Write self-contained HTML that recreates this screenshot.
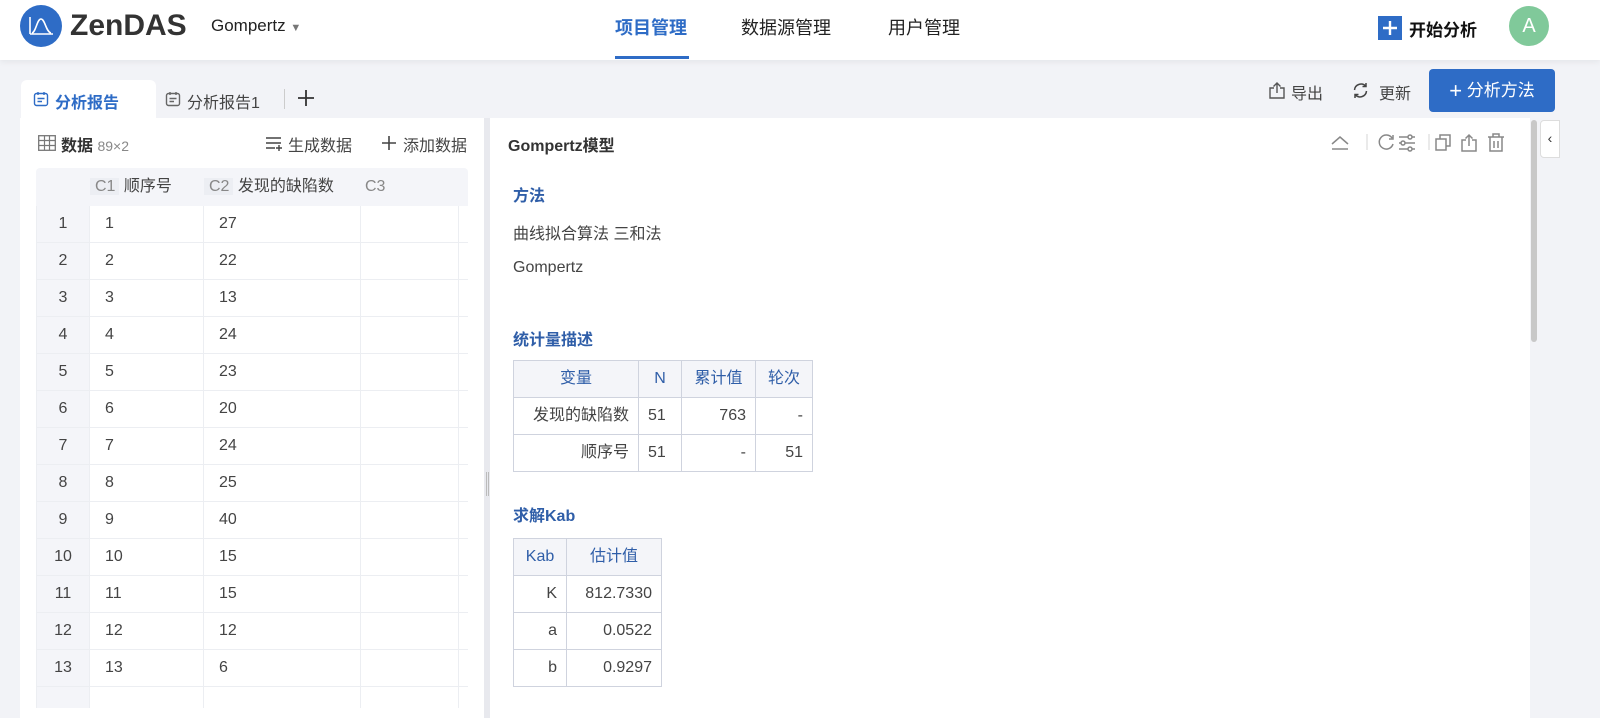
<!DOCTYPE html>
<html><head><meta charset="utf-8"><style>
*{margin:0;padding:0;box-sizing:border-box}
body{width:1600px;height:711px;overflow:hidden;background:#f2f3f7;font-family:"Liberation Sans","Noto Sans CJK SC",sans-serif;color:#333;position:relative}
.a{position:absolute;white-space:nowrap}
.hdr{left:0;top:0;width:1600px;height:60px;background:#fff;box-shadow:0 2px 6px rgba(0,0,0,.06)}
.nav{font-size:18px;top:14px;color:#222}
table{border-collapse:collapse;position:absolute;font-size:16px;table-layout:fixed}
td{vertical-align:middle;line-height:20px}
.st td{border:1px solid #cfd3de;height:37px;padding:0 9px;color:#444}
.st tr:first-child td{background:#f4f5f9;color:#2f5ea8;text-align:center}
.dt td{border:1px solid #eceef2;height:37px;color:#444;font-size:16px;padding:0}
.ic{fill:none;stroke:#888;stroke-width:1.4}
</style></head><body>
<div class="a hdr"></div>
<svg class="a" style="left:20px;top:5px" width="44" height="44"><circle cx="21" cy="21" r="21" fill="#2e6cc6"/><path d="M10 29V12M10 29H33M12 28C16 27 17 14 21 14S26 27 31 28" stroke="#fff" stroke-width="1.6" fill="none"/></svg>
<div class="a" style="left:70px;top:9px;font-size:30px;font-weight:bold;color:#333">ZenDAS</div>
<div class="a" style="left:211px;top:16px;font-size:17px;color:#222">Gompertz <span style="font-size:11px;color:#777">▼</span></div>
<div class="a nav" style="left:615px;color:#2e6cc6;font-weight:bold">项目管理</div>
<div class="a" style="left:615px;top:56px;width:74px;height:3px;background:#2e6cc6"></div>
<div class="a nav" style="left:741px">数据源管理</div>
<div class="a nav" style="left:888px">用户管理</div>
<svg class="a" style="left:1378px;top:16px" width="24" height="24"><rect width="24" height="24" fill="#2e6cc6"/><path d="M12 5V19M5 12H19" stroke="#fff" stroke-width="2.4"/></svg>
<div class="a" style="left:1409px;top:16px;font-size:17px;font-weight:bold;color:#111">开始分析</div>
<div class="a" style="left:1509px;top:6px;width:40px;height:40px;border-radius:50%;background:#80c99a;color:#fff;font-size:20px;text-align:center;line-height:40px">A</div>

<div class="a" style="left:21px;top:80px;width:135px;height:40px;background:#fff;border-radius:6px 6px 0 0"></div>
<svg class="a" style="left:33px;top:91px" width="16" height="16"><rect x="1.5" y="2.5" width="13" height="12" rx="2" fill="none" stroke="#2e6cc6" stroke-width="1.4"/><path d="M5 1V4M11 1V4M4.5 7.5H11.5M4.5 10.5H9" stroke="#2e6cc6" stroke-width="1.4"/></svg>
<div class="a" style="left:55px;top:89px;font-size:16px;color:#2e6cc6;font-weight:bold">分析报告</div>
<svg class="a" style="left:165px;top:91px" width="16" height="16"><rect x="1.5" y="2.5" width="13" height="12" rx="2" fill="none" stroke="#666" stroke-width="1.4"/><path d="M5 1V4M11 1V4M4.5 7.5H11.5M4.5 10.5H9" stroke="#666" stroke-width="1.4"/></svg>
<div class="a" style="left:187px;top:89px;font-size:16px;color:#444">分析报告1</div>
<div class="a" style="left:284px;top:89px;width:1px;height:20px;background:#ccc"></div>
<svg class="a" style="left:297px;top:89px" width="18" height="18"><path d="M9 1V17M1 9H17" stroke="#333" stroke-width="1.8"/></svg>
<svg class="a" style="left:1268px;top:81px" width="18" height="18" class="ic"><path d="M6 7H2V17H16V7H12M9 12V2M5.5 5.5L9 2L12.5 5.5" fill="none" stroke="#555" stroke-width="1.4"/></svg>
<div class="a" style="left:1291px;top:80px;font-size:16px;color:#444">导出</div>
<svg class="a" style="left:1352px;top:82px" width="17" height="17"><path d="M2.5 8A6.5 6.5 0 0 1 14 4.5M14.5 9A6.5 6.5 0 0 1 3 12.5M14 1V4.5H10.5M3 16V12.5H6.5" fill="none" stroke="#444" stroke-width="1.5"/></svg>
<div class="a" style="left:1379px;top:80px;font-size:16px;color:#444">更新</div>
<div class="a" style="left:1429px;top:69px;width:126px;height:43px;background:#2e6cc6;border-radius:4px;color:#fff;font-size:17px;line-height:43px;text-align:center"><span style="font-size:22px;vertical-align:-2px">+</span> 分析方法</div>

<div class="a" style="left:20px;top:118px;width:464px;height:600px;background:#fff"></div>
<svg class="a" style="left:38px;top:135px" width="18" height="16"><rect x="0.7" y="0.7" width="16.6" height="14.6" fill="none" stroke="#777" stroke-width="1.3"/><path d="M1 5.5H17M1 10.5H17M6.5 1V15M11.5 1V15" stroke="#777" stroke-width="1.2"/></svg>
<div class="a" style="left:61px;top:132px;font-size:16px;color:#333"><b>数据</b> <span style="color:#888;font-size:14px">89×2</span></div>
<svg class="a" style="left:265px;top:135px" width="18" height="16"><path d="M1 3H16M1 8H16M1 13H10M14 10V16M11 13H17" stroke="#444" stroke-width="1.4"/></svg>
<div class="a" style="left:288px;top:132px;font-size:16px;color:#444">生成数据</div>
<svg class="a" style="left:381px;top:135px" width="16" height="16"><path d="M8 1V15M1 8H15" stroke="#444" stroke-width="1.6"/></svg>
<div class="a" style="left:403px;top:132px;font-size:16px;color:#444">添加数据</div>
<div class="a" style="left:36px;top:168px;width:432px;height:540px;overflow:hidden;border-radius:4px 4px 0 0">
<table class="dt" style="left:0;top:0;width:440px">
<tr style="background:#f4f5f9"><td style="width:53px;border-color:#f4f5f9"></td><td style="width:114px;border-color:#f4f5f9"><span style="color:#888;padding:0 4px 0 5px;background:#eceef3">C1</span> 顺序号</td><td style="width:157px;border-color:#f4f5f9"><span style="color:#888;padding:0 4px 0 5px;background:#eceef3">C2</span> 发现的缺陷数</td><td style="width:98px;border-color:#f4f5f9"><span style="color:#888;padding:0 4px">C3</span></td><td style="border-color:#f4f5f9"></td></tr>
<tr><td style="background:#f4f5f9;text-align:center">1</td><td style="padding-left:15px">1</td><td style="padding-left:15px">27</td><td></td><td></td></tr>
<tr><td style="background:#f4f5f9;text-align:center">2</td><td style="padding-left:15px">2</td><td style="padding-left:15px">22</td><td></td><td></td></tr>
<tr><td style="background:#f4f5f9;text-align:center">3</td><td style="padding-left:15px">3</td><td style="padding-left:15px">13</td><td></td><td></td></tr>
<tr><td style="background:#f4f5f9;text-align:center">4</td><td style="padding-left:15px">4</td><td style="padding-left:15px">24</td><td></td><td></td></tr>
<tr><td style="background:#f4f5f9;text-align:center">5</td><td style="padding-left:15px">5</td><td style="padding-left:15px">23</td><td></td><td></td></tr>
<tr><td style="background:#f4f5f9;text-align:center">6</td><td style="padding-left:15px">6</td><td style="padding-left:15px">20</td><td></td><td></td></tr>
<tr><td style="background:#f4f5f9;text-align:center">7</td><td style="padding-left:15px">7</td><td style="padding-left:15px">24</td><td></td><td></td></tr>
<tr><td style="background:#f4f5f9;text-align:center">8</td><td style="padding-left:15px">8</td><td style="padding-left:15px">25</td><td></td><td></td></tr>
<tr><td style="background:#f4f5f9;text-align:center">9</td><td style="padding-left:15px">9</td><td style="padding-left:15px">40</td><td></td><td></td></tr>
<tr><td style="background:#f4f5f9;text-align:center">10</td><td style="padding-left:15px">10</td><td style="padding-left:15px">15</td><td></td><td></td></tr>
<tr><td style="background:#f4f5f9;text-align:center">11</td><td style="padding-left:15px">11</td><td style="padding-left:15px">15</td><td></td><td></td></tr>
<tr><td style="background:#f4f5f9;text-align:center">12</td><td style="padding-left:15px">12</td><td style="padding-left:15px">12</td><td></td><td></td></tr>
<tr><td style="background:#f4f5f9;text-align:center">13</td><td style="padding-left:15px">13</td><td style="padding-left:15px">6</td><td></td><td></td></tr>
<tr><td style="background:#f4f5f9"></td><td></td><td></td><td></td><td></td></tr>
</table></div>
<div class="a" style="left:484px;top:118px;width:6px;height:600px;background:#e8e9ee"></div>
<div class="a" style="left:486px;top:472px;height:24px;border-left:1px solid #bbb;border-right:1px solid #bbb;width:3px"></div>

<div class="a" style="left:490px;top:118px;width:1040px;height:600px;background:#fff"></div>
<div class="a" style="left:1531px;top:120px;width:6px;height:222px;background:#c8c8c8;border-radius:3px"></div>
<div class="a" style="left:1540px;top:120px;width:20px;height:38px;background:#fff;border:1px solid #ddd;border-radius:4px 0 0 4px;font-size:14px;text-align:center;line-height:34px;color:#333">‹</div>
<div class="a" style="left:508px;top:132px;font-size:16px;font-weight:bold;color:#333">Gompertz模型</div>
<svg class="a" style="left:1328px;top:132px" width="185" height="22">
<g fill="none" stroke="#888" stroke-width="1.5">
<path d="M4 12L12 5L20 12M4 17H20"/>
<path d="M39 2V18" stroke="#e2e2e2"/>
<path d="M64 6A7 7 0 1 0 65 12M65 3V7H61"/>
<path d="M71 5H87M71 11H87M71 17H87"/><circle cx="82" cy="5" r="2" fill="#fff"/><circle cx="75" cy="11" r="2" fill="#fff"/><circle cx="82" cy="17" r="2" fill="#fff"/>
<path d="M101 2V18" stroke="#e2e2e2"/>
<rect x="108" y="7" width="10" height="11"/><path d="M112 7V3H122V14H118"/>
<path d="M138 8H134V19H148V8H144M141 14V3M137.5 6.5L141 3L144.5 6.5"/>
<path d="M160 5H176M165 5V2H171V5M162 5V19H174V5M166 9V16M170 9V16"/>
</g></svg>
<div class="a" style="left:513px;top:182px;font-size:16px;font-weight:bold;color:#2f5ea8">方法</div>
<div class="a" style="left:513px;top:220px;font-size:16px;color:#444">曲线拟合算法 三和法</div>
<div class="a" style="left:513px;top:259px;font-size:16px;color:#444">Gompertz</div>
<div class="a" style="left:513px;top:326px;font-size:16px;font-weight:bold;color:#2f5ea8">统计量描述</div>
<table class="st" style="left:513px;top:360px;width:299px">
<tr><td style="width:125px">变量</td><td style="width:43px">N</td><td style="width:74px">累计值</td><td style="width:57px">轮次</td></tr>
<tr><td style="text-align:right">发现的缺陷数</td><td>51</td><td style="text-align:right">763</td><td style="text-align:right">-</td></tr>
<tr><td style="text-align:right">顺序号</td><td>51</td><td style="text-align:right">-</td><td style="text-align:right">51</td></tr>
</table>
<div class="a" style="left:513px;top:502px;font-size:16px;font-weight:bold;color:#2f5ea8">求解Kab</div>
<table class="st" style="left:513px;top:538px;width:148px">
<tr><td style="width:53px">Kab</td><td style="width:95px">估计值</td></tr>
<tr><td style="text-align:right">K</td><td style="text-align:right">812.7330</td></tr>
<tr><td style="text-align:right">a</td><td style="text-align:right">0.0522</td></tr>
<tr><td style="text-align:right">b</td><td style="text-align:right">0.9297</td></tr>
</table>
</body></html>
